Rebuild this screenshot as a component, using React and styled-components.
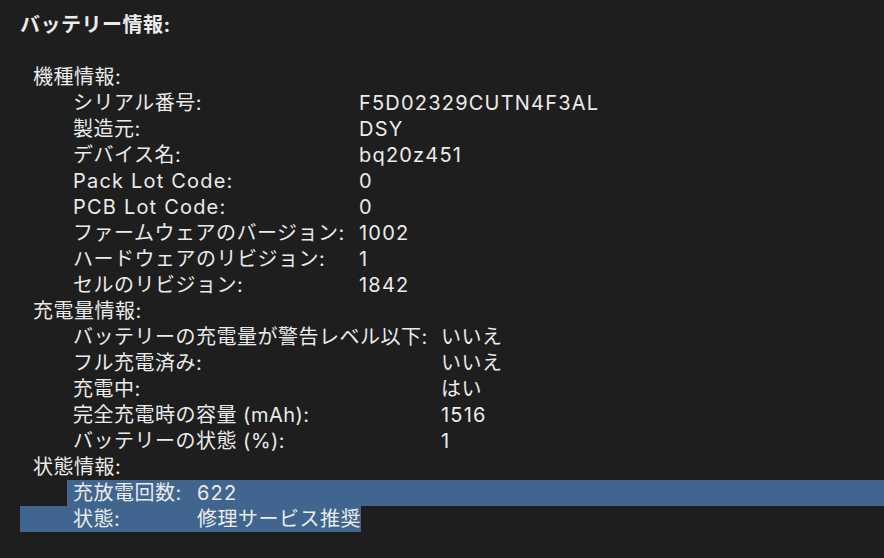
import React from "react";
import styled, { createGlobalStyle } from "styled-components";

const Global = createGlobalStyle`
  html, body { margin: 0; padding: 0; background: #1e1e1e; }
  body {
    font-family: Inter, "Noto Sans CJK JP", sans-serif;
    color: #ebebeb;
    -webkit-font-smoothing: antialiased;
  }
`;

const Page = styled.div`
  width: 884px;
  height: 558px;
  overflow: hidden;
  background: #1e1e1e;
  padding: 12px 0 0 20px;
  box-sizing: border-box;
  font-size: 20px;
  line-height: 26px;
  letter-spacing: 0.5px;
`;

const Title = styled.div`
  font-weight: 700;
  height: 26px;
  margin-bottom: 26px;
`;

const Section = styled.div`
  padding-left: 13px;
  height: 26px;
  white-space: nowrap;
`;

const Row = styled.div`
  display: grid;
  grid-template-columns: ${(p) => p.$labelWidth}px auto;
  padding-left: 53px;
  height: 26px;
  white-space: nowrap;
`;

const Text = styled.span`
  letter-spacing: ${(p) => (p.$latin ? "1.2px" : "0.5px")};
`;

const SelFirst = styled(Row)`
  margin-left: 47px;
  padding-left: 6px;
  background: #40658e;
`;

const SelLast = styled(Row)`
  width: fit-content;
  background: #40658e;
`;

const isLatin = (s) => /^[\x00-\x7f]+$/.test(s);

const T = ({ children }) => <Text $latin={isLatin(children)}>{children}</Text>;

const model = [
  ["シリアル番号:", "F5D02329CUTN4F3AL"],
  ["製造元:", "DSY"],
  ["デバイス名:", "bq20z451"],
  ["Pack Lot Code:", "0"],
  ["PCB Lot Code:", "0"],
  ["ファームウェアのバージョン:", "1002"],
  ["ハードウェアのリビジョン:", "1"],
  ["セルのリビジョン:", "1842"],
];

const charge = [
  ["バッテリーの充電量が警告レベル以下:", "いいえ"],
  ["フル充電済み:", "いいえ"],
  ["充電中:", "はい"],
  ["完全充電時の容量 (mAh):", "1516"],
  ["バッテリーの状態 (%):", "1"],
];

export default function App() {
  return (
    <>
      <Global />
      <Page>
        <Title>バッテリー情報:</Title>
        <Section>機種情報:</Section>
        {model.map(([l, v]) => (
          <Row key={l} $labelWidth={286}>
            <T>{l}</T>
            <T>{v}</T>
          </Row>
        ))}
        <Section>充電量情報:</Section>
        {charge.map(([l, v]) => (
          <Row key={l} $labelWidth={368}>
            <T>{l}</T>
            <T>{v}</T>
          </Row>
        ))}
        <Section>状態情報:</Section>
        <SelFirst $labelWidth={124}>
          <T>充放電回数:</T>
          <T>622</T>
        </SelFirst>
        <SelLast $labelWidth={124}>
          <T>状態:</T>
          <T>修理サービス推奨</T>
        </SelLast>
      </Page>
    </>
  );
}
